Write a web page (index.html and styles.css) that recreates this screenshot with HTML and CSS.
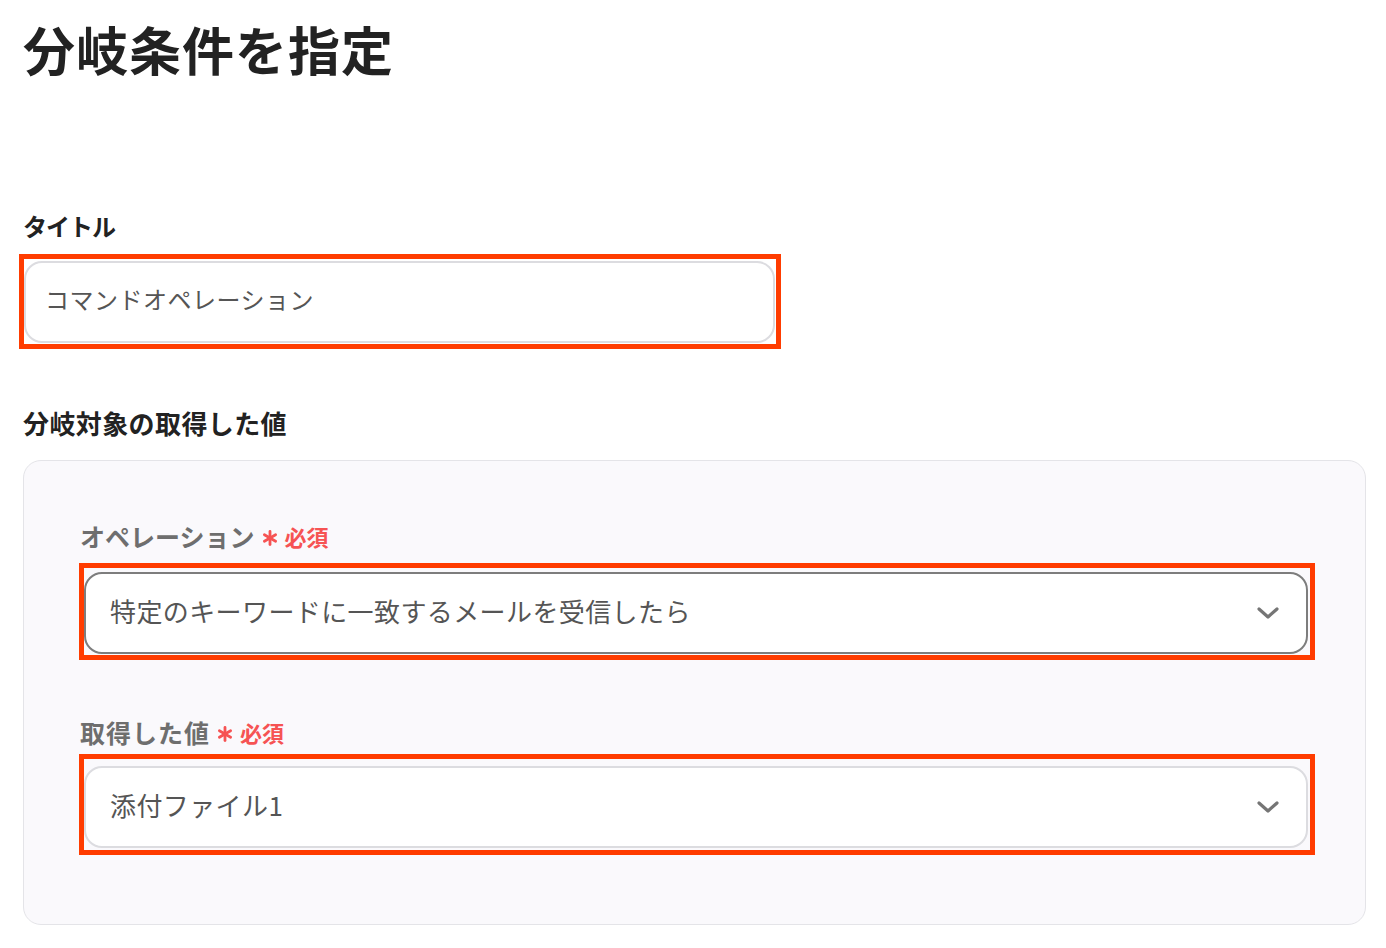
FILE: index.html
```html
<!DOCTYPE html>
<html lang="ja">
<head>
<meta charset="utf-8">
<title>分岐条件を指定</title>
<link rel="stylesheet" href="styles.css">
</head>
<body>
<main class="page">
  <h1 class="page-title">分岐条件を指定</h1>

  <section class="field title-field">
    <label class="field-label">タイトル</label>
    <div class="hl hl-title">
      <div class="text-input">コマンドオペレーション</div>
    </div>
  </section>

  <section class="field target-field">
    <h2 class="section-label">分岐対象の取得した値</h2>
    <div class="panel">
      <div class="sub-field">
        <div class="sub-label">オペレーション<span class="req"><svg class="req-star" width="16" height="16" viewBox="0 0 16 16"><g stroke="#f65353" stroke-width="2.8" stroke-linecap="round"><line x1="8" y1="1.5" x2="8" y2="14.5"/><line x1="2.4" y1="4.75" x2="13.6" y2="11.25"/><line x1="2.4" y1="11.25" x2="13.6" y2="4.75"/></g></svg>必須</span></div>
        <div class="hl hl-op">
          <div class="select select-focused">
            <span class="select-text">特定のキーワードに一致するメールを受信したら</span>
            <svg class="chev" width="22" height="14" viewBox="0 0 22 14"><polyline points="2,3 11,11 20,3" fill="none" stroke="#757575" stroke-width="3.2" stroke-linecap="round" stroke-linejoin="round"/></svg>
          </div>
        </div>
      </div>
      <div class="sub-field second">
        <div class="sub-label">取得した値<span class="req"><svg class="req-star" width="16" height="16" viewBox="0 0 16 16"><g stroke="#f65353" stroke-width="2.8" stroke-linecap="round"><line x1="8" y1="1.5" x2="8" y2="14.5"/><line x1="2.4" y1="4.75" x2="13.6" y2="11.25"/><line x1="2.4" y1="11.25" x2="13.6" y2="4.75"/></g></svg>必須</span></div>
        <div class="hl hl-val">
          <div class="select">
            <span class="select-text">添付ファイル1</span>
            <svg class="chev" width="22" height="14" viewBox="0 0 22 14"><polyline points="2,3 11,11 20,3" fill="none" stroke="#757575" stroke-width="3.2" stroke-linecap="round" stroke-linejoin="round"/></svg>
          </div>
        </div>
      </div>
    </div>
  </section>
</main>
</body>
</html>
```

FILE: styles.css
```css
* { box-sizing: border-box; }
html, body { margin: 0; padding: 0; background: #ffffff; }
body {
  font-family: "Noto Sans CJK JP", "Noto Sans", sans-serif;
  color: #222222;
}
.page {
  padding: 18px 20px 0 23px;
  display: flex;
  flex-direction: column;
}
.page-title {
  margin: 0;
  font-size: 52px;
  line-height: 62px;
  font-weight: 700;
  letter-spacing: 1px;
  color: #222222;
}
.field { display: flex; flex-direction: column; }
.title-field { margin-top: 130px; }
.field-label {
  font-size: 24px;
  line-height: 32px;
  font-weight: 700;
  letter-spacing: -1px;
  color: #222222;
}
.hl {
  border: 5px solid #ff3c00;
}
.hl-title {
  margin-top: 12px;
  margin-left: -4px;
  width: 762px;
  padding: 2px 1px 1px 0;
}
.text-input {
  height: 82px;
  border: 2px solid #dcdce0;
  border-radius: 18px;
  background: #fff;
  padding: 0 17px 7px 19px;
  display: flex;
  align-items: center;
  font-size: 24px;
  letter-spacing: 0.5px;
  color: #555555;
}
.target-field { margin-top: 57px; }
.section-label {
  margin: 0;
  font-size: 26px;
  line-height: 34px;
  font-weight: 700;
  letter-spacing: 0.4px;
  color: #222222;
}
.panel {
  margin-top: 20px;
  border: 1px solid #e4e4e8;
  border-radius: 18px;
  background: #faf9fc;
  padding: 59px 50px 69px 56px;
  display: flex;
  flex-direction: column;
}
.sub-field { display: flex; flex-direction: column; }
.sub-field.second { margin-top: 56px; }
.sub-label {
  font-size: 25px;
  line-height: 33px;
  font-weight: 700;
  color: #6e6e6e;
  display: flex;
  align-items: center;
}
.second .sub-label { letter-spacing: 1px; }
.req {
  margin-left: 7px;
  font-size: 22px;
  color: #f65353;
  font-weight: 700;
  letter-spacing: 0;
  display: flex;
  align-items: center;
}
.req-star { margin-right: 7px; margin-top: 3px; }
.hl-op { margin-top: 10px; margin-left: -1px; padding: 4px 2px 1px 0; }
.hl-val { margin-top: 5px; margin-left: -1px; padding: 7px 2px 2px 0; }
.select {
  height: 82px;
  border: 2px solid #dcdce0;
  border-radius: 18px;
  background: #fff;
  padding: 0 27px 6px 24px;
  display: flex;
  align-items: center;
  justify-content: space-between;
}
.select-focused { border-color: #7d7d7d; }
.select-text {
  font-size: 26px;
  letter-spacing: 0.4px;
  color: #555555;
}
.chev { flex: none; margin-top: 6px; }
```
